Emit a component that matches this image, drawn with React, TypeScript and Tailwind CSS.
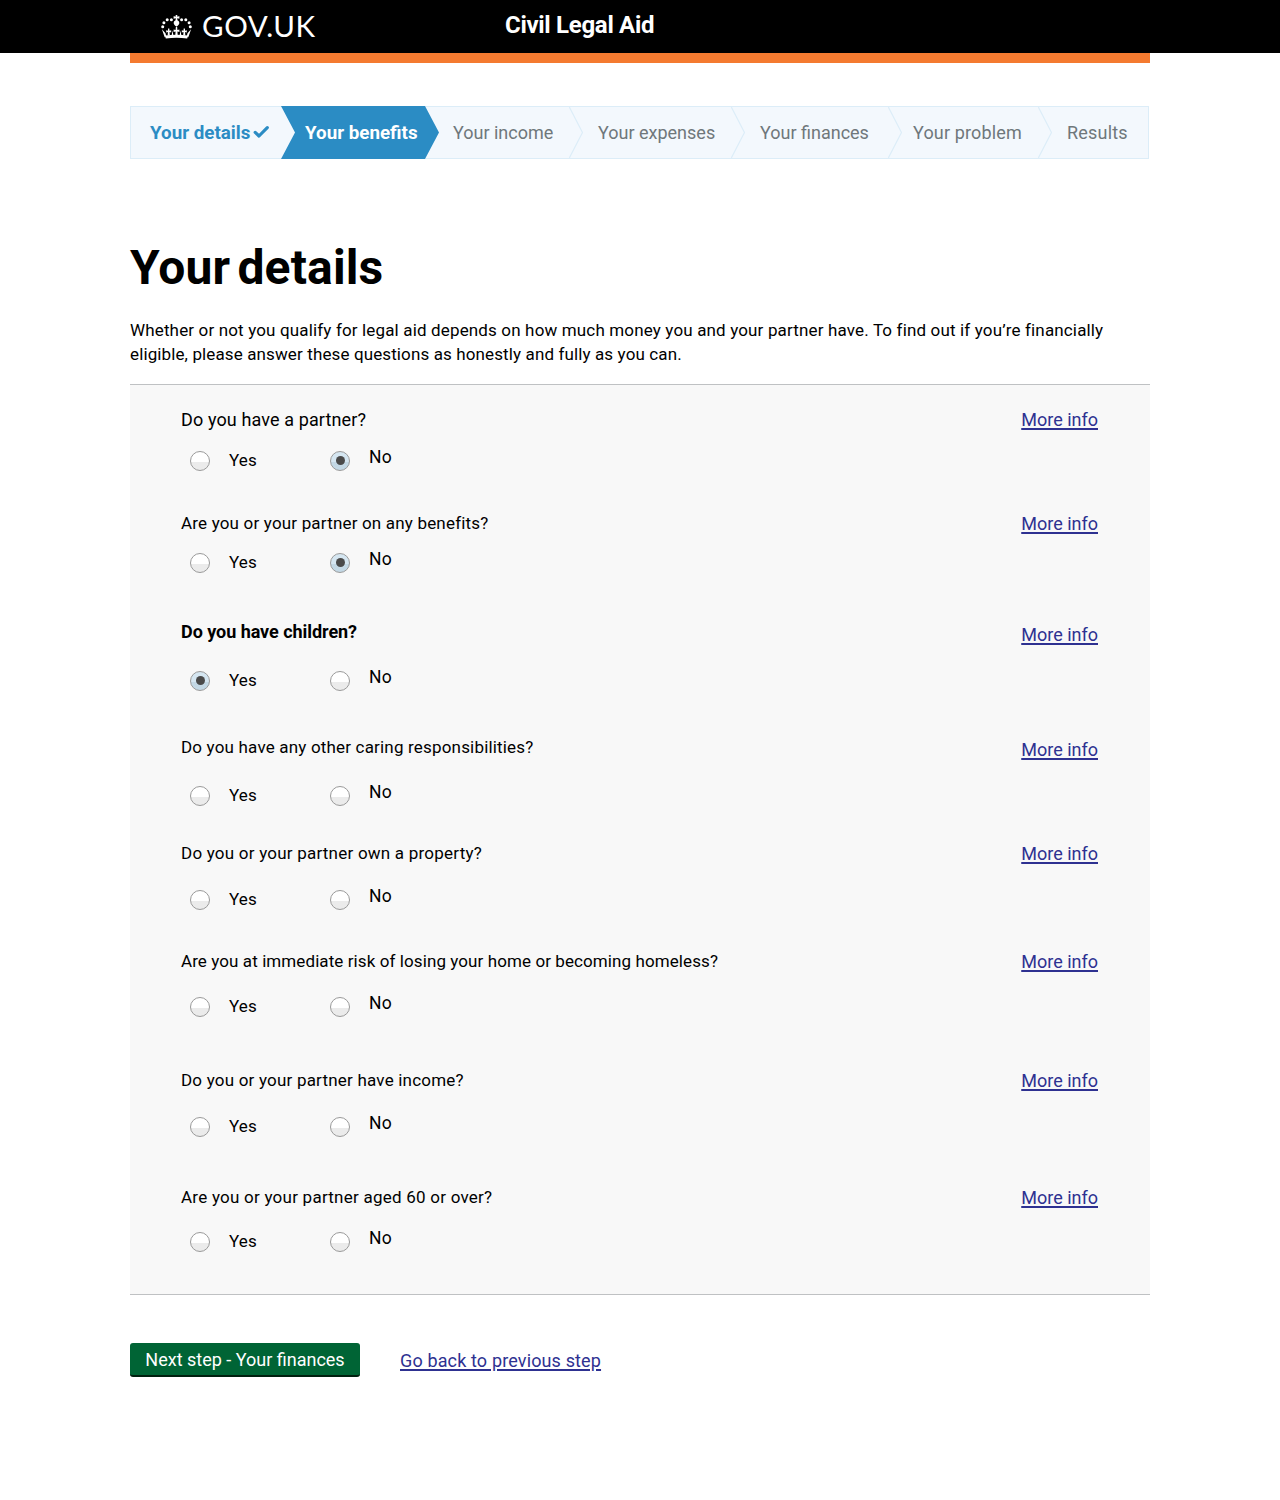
type Answer = "yes" | "no" | null;

interface Question {
  text: string;
  answer: Answer;
  textClass: string;
  infoClass: string;
  optionsClass: string;
  rowClass: string;
}

const questions: Question[] = [
  { text: "Do you have a partner?", answer: "no", textClass: "text-[18px] tracking-[0.12px]", infoClass: "mt-0", optionsClass: "mt-[19px]", rowClass: "mb-[40px]" },
  { text: "Are you or your partner on any benefits?", answer: "no", textClass: "text-[17px] tracking-[0.18px]", infoClass: "mt-px", optionsClass: "mt-[18px]", rowClass: "mb-[47px]" },
  { text: "Do you have children?", answer: "yes", textClass: "text-[18px] font-bold tracking-[-0.05px]", infoClass: "mt-[3px]", optionsClass: "mt-[27px]", rowClass: "mb-[44px]" },
  { text: "Do you have any other caring responsibilities?", answer: null, textClass: "text-[17px] tracking-[0.18px]", infoClass: "mt-[3px]", optionsClass: "mt-[27px]", rowClass: "mb-[35px]" },
  { text: "Do you or your partner own a property?", answer: null, textClass: "text-[17px] tracking-[0.22px]", infoClass: "mt-px", optionsClass: "mt-[25px]", rowClass: "mb-[39px]" },
  { text: "Are you at immediate risk of losing your home or becoming homeless?", answer: null, textClass: "text-[17px] tracking-[0.09px]", infoClass: "mt-px", optionsClass: "mt-[24px]", rowClass: "mb-[51px]" },
  { text: "Do you or your partner have income?", answer: null, textClass: "text-[17px] tracking-[0.2px]", infoClass: "mt-px", optionsClass: "mt-[25px]", rowClass: "mb-[48px]" },
  { text: "Are you or your partner aged 60 or over?", answer: null, textClass: "text-[17px] tracking-[0.24px]", infoClass: "mt-px", optionsClass: "mt-[23px]", rowClass: "mb-[42px]" },
];

function Crown() {
  return (
    <svg width="31" height="24" viewBox="0 0 31 24" fill="#fff" aria-hidden="true">
      <circle cx="1.7" cy="11.7" r="1.5" />
      <circle cx="2.900" cy="7.700" r="1.5" />
      <circle cx="6.200" cy="4.700" r="1.5" />
      <circle cx="10.400" cy="4.700" r="1.5" />
      <circle cx="29.300" cy="11.700" r="1.5" />
      <circle cx="28.100" cy="7.700" r="1.5" />
      <circle cx="24.800" cy="4.700" r="1.5" />
      <circle cx="20.600" cy="4.700" r="1.5" />
      <path d="M14.600 0h1.800l-.3 1.600 2.300-.4v2.600l-2.200-.5.2 2c1.100.4 1.900 1.500 1.900 2.700 0 1.300-1.200 2.200-1.900 3.100h-1.800c-.7-.9-1.900-1.800-1.900-3.100 0-1.200.8-2.300 1.900-2.700l.2-2-2.200.5V1.200l2.300.4z" />
      <path d="M3.900 20.600c7.700-1.100 15.500-1.100 23.200 0l-.9 2.900c-7.100-.9-14.300-.9-21.400 0z" />
      <path d="M.9 14.200l3.600 4.100.7 2.900-1.500 1z M30.100 14.200l-3.600 4.100-.7 2.900 1.500 1z" />
      <path d="M14.900 11.500h1.200l.3 3.600 2-.7v2.600l-2-.5.3 4.100h-2.400l.3-4.100-2 .5v-2.600l2 .7z" />
      <path d="M7.100 13.400h1.200l.2 2.300 1.700-.5v2.200l-1.700-.4.3 3.600H6.700l.2-3.600-1.700.4v-2.200l1.700.5z" />
      <path d="M22.700 13.400h1.200l.2 2.300 1.700-.5v2.200l-1.700-.4.2 3.600h-2.100l.3-3.600-1.700.4v-2.200l1.700.5z" />
      <path d="M11.500 15.400l.9 5.200h-1.800z M19.500 15.400l.9 5.200h-1.800z" />
    </svg>
  );
}

function Divider() {
  return (
    <svg className="shrink-0" width="14" height="51" viewBox="0 0 14 51" fill="none" aria-hidden="true">
      <path d="M.3 0 13.500 25.500.3 51" stroke="#dcedf8" strokeWidth="1.200" />
    </svg>
  );
}

function Progress() {
  return (
    <nav className="flex h-[53px] w-[1019px] border border-[#dcedf8] bg-[#f3f8fd] text-[18px] leading-[51px] text-[#6f777b]">
      <div className="flex w-[150px] items-center pl-[19px] text-[18.8px] font-bold text-[#2b8cc4]">
        <span className="pt-px">Your details</span>
        <svg className="mb-px ml-[3px] shrink-0" width="17" height="14" viewBox="0 0 17 14" fill="none" aria-hidden="true">
          <path d="M2.200 7.400 6 11 14.300 2.600" stroke="#2b8cc4" strokeWidth="3.200" strokeLinecap="round" strokeLinejoin="round" />
        </svg>
      </div>
      <div className="-my-px flex h-[53px] w-[158px] items-center bg-[#2b8cc4] pt-px pl-[24px] text-[18.8px] font-bold text-white [clip-path:polygon(0_0,144px_0,100%_50%,144px_100%,0_100%,14px_50%)]">
        Your benefits
      </div>
      <div className="w-[130px] pl-[14px]">Your income</div>
      <Divider />
      <div className="w-[148px] pl-[15px]">Your expenses</div>
      <Divider />
      <div className="w-[143px] pl-[15px]">Your finances</div>
      <Divider />
      <div className="w-[136px] pl-[11px] tracking-[0.15px]">Your problem</div>
      <Divider />
      <div className="pl-[15px] tracking-[0.2px]">Results</div>
    </nav>
  );
}

function Radio({ checked }: { checked: boolean }) {
  return (
    <span
      className={
        "flex size-5 shrink-0 items-center justify-center rounded-full border border-[#9a9a9a] " +
        (checked
          ? "bg-[linear-gradient(#d5e6f1_55%,#c3d8e5_55%)]"
          : "bg-[linear-gradient(#ffffff_55%,#ebebeb_55%)]")
      }
    >
      {checked && <span className="mb-px size-[9px] rounded-full bg-[#4a4a4a]" />}
    </span>
  );
}

function MoreLink({ children, className = "" }: { children: string; className?: string }) {
  return (
    <a
      href="#"
      className={"text-[18px] leading-6 text-[#2e3191] underline decoration-2 underline-offset-[2px] " + className}
    >
      {children}
    </a>
  );
}

function QuestionRow({ q }: { q: Question }) {
  return (
    <div className={q.rowClass}>
      <div className="flex h-6 items-start justify-between">
        <span className={"leading-6 " + q.textClass}>{q.text}</span>
        <MoreLink className={q.infoClass}>More info</MoreLink>
      </div>
      <div className={"flex h-5 items-start pl-[9px] text-[17px] leading-5 tracking-[0.2px] " + q.optionsClass}>
        <label className="flex w-[140px] gap-[19px]">
          <Radio checked={q.answer === "yes"} />
          <span className="-mt-px">Yes</span>
        </label>
        <label className="flex gap-[19px]">
          <Radio checked={q.answer === "no"} />
          <span className="-mt-[4px] text-[17.5px]">No</span>
        </label>
      </div>
    </div>
  );
}

export default function App() {
  return (
    <div className="min-h-[1500px] bg-white font-['Roboto',sans-serif] text-black">
      <header className="h-[53px] bg-black">
        <div className="mx-auto flex w-[1020px] pl-[31px] text-white">
          <div className="flex w-[344px] items-start pt-[15px]">
            <Crown />
            <span className="-mt-[6px] ml-[10px] font-['Lato',sans-serif] text-[29.5px] leading-[34px] tracking-[0.6px]">GOV.UK</span>
          </div>
          <span className="pt-[9px] text-[24px] leading-8 font-bold tracking-[-0.3px]">Civil Legal Aid</span>
        </div>
      </header>
      <main className="mx-auto w-[1020px]">
        <div className="mb-[43px] h-[10px] bg-[#f47a30]" />
        <Progress />
        <h1 className="mt-[79px] text-[48px] leading-[60px] font-bold tracking-[0.15px] [word-spacing:-5px]">Your details</h1>
        <p className="mt-[20px] text-[17px] leading-6 tracking-[0.15px]">
          Whether or not you qualify for legal aid depends on how much money you and your partner have. To find out if you’re financially
          <br />
          <span className="tracking-[0.12px]">eligible, please answer these questions as honestly and fully as you can.</span>
        </p>
        <section className="mt-[18px] flex h-[911px] flex-col border-y border-[#bfc1c3] bg-[#f8f8f8] pt-[23px] pr-[52px] pl-[51px]">
          {questions.map((q) => (
            <QuestionRow key={q.text} q={q} />
          ))}
        </section>
        <div className="mt-[48px] flex items-start">
          <button className="h-[34px] w-[230px] rounded-[3px] border-b-2 border-[#00200f] bg-[#006435] pt-px text-[18px] leading-8 text-white">
            Next step - Your finances
          </button>
          <MoreLink className="mt-[6px] ml-[40px] tracking-[0.14px]">Go back to previous step</MoreLink>
        </div>
      </main>
    </div>
  );
}
